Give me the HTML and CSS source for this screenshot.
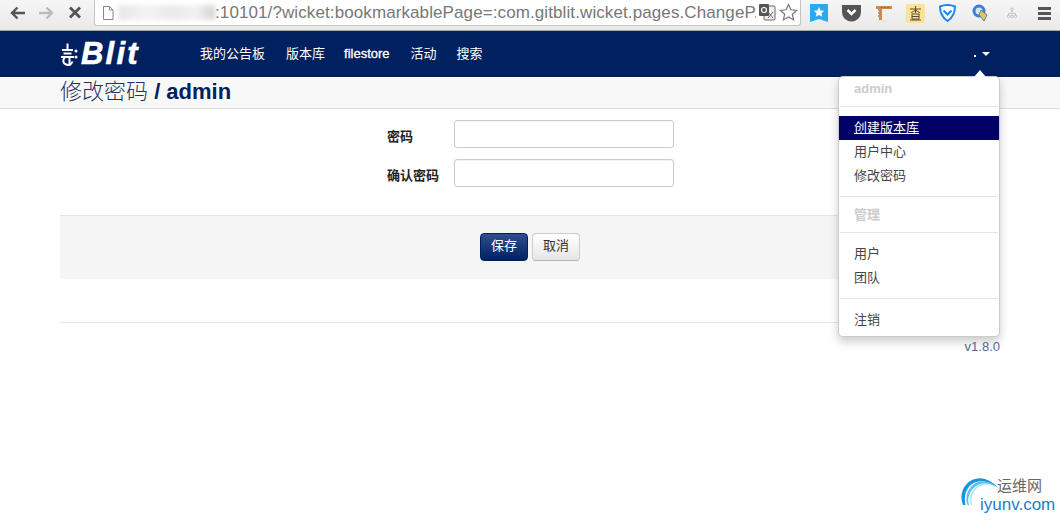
FILE: index.html
```html
<!DOCTYPE html>
<html lang="zh">
<head>
<meta charset="utf-8">
<title>修改密码</title>
<link rel="stylesheet" href="styles.css">
</head>
<body>
<div class="toolbar">
  <svg class="tb-nav" width="20" height="16" viewBox="0 0 20 16"><path d="M17 8H4M9.500 2.500L4 8l5.500 5.500" fill="none" stroke="#555" stroke-width="2.400"/></svg>
  <svg class="tb-nav fwd" width="20" height="16" viewBox="0 0 20 16"><path d="M3 8h13M10.500 2.500L16 8l-5.500 5.500" fill="none" stroke="#bbb" stroke-width="2.400"/></svg>
  <svg class="tb-nav stop" width="16" height="16" viewBox="0 0 16 16"><path d="M3 2.500l10 10M13 2.500l-10 10" fill="none" stroke="#555" stroke-width="2.800"/></svg>
  <div class="omnibox">
    <svg class="page-ico" width="12" height="14" viewBox="0 0 12 14"><path d="M1.500.5h6l3.500 3.500v9.500h-9.500zM7.500.5V4H11" fill="#fff" stroke="#888"/></svg>
    <span class="blurred"></span>
    <span class="url">:10101/?wicket:bookmarkablePage=:com.gitblit.wicket.pages.ChangeP.</span>
    <svg class="translate" width="18" height="18" viewBox="0 0 18 18"><rect x="6" y="3" width="11" height="14" rx="1" fill="#eee" stroke="#666"/><rect x="1" y="1" width="10" height="12" rx="1" fill="#555"/><circle cx="6" cy="7" r="2.500" fill="none" stroke="#fff" stroke-width="1.200"/><path d="M10 9l5 6M15 9l-5 6" stroke="#666"/></svg>
    <svg class="star" width="19" height="19" viewBox="0 0 19 19"><path d="M9.500 1.500l2.400 5.300 5.700.6-4.300 3.800 1.300 5.700-5.100-3-5.100 3 1.300-5.700L1.400 7.400l5.700-.6z" fill="#fff" stroke="#777" stroke-width="1.200"/></svg>
  </div>
  <div class="exts">
    <svg width="18" height="18" viewBox="0 0 18 18"><path d="M0 0h18v18l-9-3-9 3z" fill="#2aa9f0"/><path d="M9 3l1.600 3.400 3.600.4-2.700 2.400.8 3.500L9 10.900l-3.300 1.800.8-3.500L3.800 6.800l3.600-.4z" fill="#fff"/></svg>
    <svg width="19" height="18" viewBox="0 0 19 18"><path d="M0 1h19v7a9.500 9.500 0 0 1-19 0z" fill="#555"/><path d="M5.500 6l4 4 4-4" fill="none" stroke="#fff" stroke-width="2.500"/></svg>
    <svg class="ext-ruler" width="16" height="18" viewBox="0 0 16 18"><path d="M0 2h16v3H6v11H3V5H0z" fill="#c98a4b"/><path d="M2 6h1M2 9h1M2 12h1M6 3v1M9 3v1M12 3v1" stroke="#7d4f22"/><path d="M2 16.500h9v1H2z" fill="#ddd"/></svg>
    <svg class="ext-yellow" width="19" height="19" viewBox="0 0 19 19"><rect width="19" height="19" fill="#fbe39d"/><path d="M4 5h11M9.500 2v7M5 9l4.500-3 4.500 3M6 10h7v5H6zM6 12.500h7M4 16h11" fill="none" stroke="#5b4a2a"/></svg>
    <svg class="ext-shield" width="17" height="18" viewBox="0 0 17 18"><path d="M1 2.500Q8.500-.500 16 2.500 16 12 8.500 17 1 12 1 2.500z" fill="#fff" stroke="#1f86ee" stroke-width="2"/><path d="M4.500 6.500l4 4 4-4" fill="none" stroke="#1f86ee" stroke-width="2"/></svg>
    <svg class="ext-mag" width="16" height="18" viewBox="0 0 16 18"><circle cx="7" cy="7" r="6.500" fill="#3f7fd0"/><circle cx="7" cy="7" r="3.500" fill="#cfe6fb"/><path d="M9 6l6 5-3 6-5-6z" fill="#e7c25a" stroke="#2d5c9d" stroke-width=".7"/></svg>
    <svg class="ext-tree" width="14" height="16" viewBox="0 0 16 16"><rect width="16" height="16" rx="3" fill="#f2f2f2"/><path d="M8 5v3M4 11V8.500h8V11" fill="none" stroke="#bbb"/><circle cx="8" cy="3.800" r="1.500" fill="none" stroke="#bbb"/><circle cx="4" cy="12" r="1.500" fill="none" stroke="#bbb"/><circle cx="8" cy="12" r="1.500" fill="none" stroke="#bbb"/><circle cx="12" cy="12" r="1.500" fill="none" stroke="#bbb"/></svg>
    <span class="menu-ico"><i></i><i></i><i></i></span>
  </div>
</div>

<nav class="navbar">
  <div class="wrap nav-inner">
    <a class="brand"><svg class="brand-mark" width="18" height="25" viewBox="0 0 18 25"><path d="M2 8h11M7.500 1.500V8M3.500 11.500h8M1 15h13M4.500 15.500q-3 5 1.500 7t6.500-3M9.500 15v9" fill="none" stroke="#fff" stroke-width="2"/><circle cx="16" cy="9" r="1.500" fill="#fff"/><circle cx="16" cy="15" r="1.500" fill="#fff"/></svg><span class="brand-text">Blit</span></a>
    <ul class="nav-links">
      <li>我的公告板</li>
      <li class="nav-tight">版本库</li>
      <li class="latin">filestore</li>
      <li>活动</li>
      <li>搜索</li>
    </ul>
    <div class="user-toggle"><span class="dot"></span><span class="caret"></span></div>
  </div>
</nav>

<header class="subhead">
  <div class="wrap"><h1 class="title"><span class="title-light">修改密码</span> / admin</h1></div>
</header>

<main class="wrap">
  <form class="pw-form">
    <div class="form-row"><label class="form-label">密码</label><input class="form-input" type="password"></div>
    <div class="form-row"><label class="form-label">确认密码</label><input class="form-input" type="password"></div>
  </form>
  <div class="form-actions">
    <button class="btn btn-primary" type="button">保存</button>
    <button class="btn" type="button">取消</button>
  </div>
  <footer class="foot">v1.8.0</footer>
</main>

<div class="dropdown">
  <div class="dd-head">admin</div>
  <div class="dd-div dd-div-a"></div>
  <a class="dd-item active">创建版本库</a>
  <a class="dd-item">用户中心</a>
  <a class="dd-item">修改密码</a>
  <div class="dd-div dd-div-b"></div>
  <div class="dd-head">管理</div>
  <div class="dd-div dd-div-c"></div>
  <a class="dd-item">用户</a>
  <a class="dd-item">团队</a>
  <div class="dd-div dd-div-d"></div>
  <a class="dd-item">注销</a>
</div>

<div class="watermark">
  <svg class="wm-arc" width="48" height="44" viewBox="0 0 48 44"><path d="M8 33C0 14 24-7 44 17 26 1 6 12 10.500 33z" fill="#1a95dd"/><path d="M12.500 33C7 18 24 0 41 15 26 5 10 18 14 33z" fill="#5cc0ee"/><path d="M16 33C12 20 24 7 37 14 25 9 14 20 17 33z" fill="#a6def5"/></svg>
  <span class="wm-cn">运维网</span>
  <span class="wm-en">iyunv.com</span>
</div>
</body>
</html>
```
FILE: styles.css
```css
* { box-sizing: border-box; }
html, body { margin: 0; padding: 0; }
body {
  width: 1060px;
  height: 520px;
  overflow: hidden;
  position: relative;
  background: #fff;
  color: #333;
  font-family: "Liberation Sans", "Noto Sans CJK SC", sans-serif;
  font-size: 13px;
}
.toolbar {
  height: 31px;
  display: flex;
  align-items: flex-start;
  background: linear-gradient(#f6f6f6, #e9e9e9);
  border-bottom: 1px solid #a8a8a8;
}
.tb-nav { margin: 5px 0 0 8px; flex: none; }
.fwd { margin-left: 8px; }
.stop { margin-left: 11px; }
.omnibox {
  width: 707px;
  height: 26px;
  margin-left: 11px;
  display: flex;
  align-items: center;
  background: #fff;
  border: 1px solid #c4c4c4;
  border-top: 0;
  border-radius: 0 0 3px 3px;
  overflow: hidden;
  position: relative;
}
.page-ico { margin-left: 7px; flex: none; }
.blurred {
  width: 97px;
  height: 15px;
  margin-left: 4px;
  flex: none;
  background: linear-gradient(90deg, #e6e6e6, #f3f3f3 30%, #e9e9e9 55%, #f1f1f1 80%, #d4d4d4);
  filter: blur(2.500px);
}
.url {
  font-size: 17px;
  line-height: 26px;
  letter-spacing: .1px;
  color: #777;
  white-space: nowrap;
  flex: none;
  width: 541px;
  overflow: hidden;
}
.translate { position: absolute; left: 663px; top: 3px; background: #fff; }
.star { position: absolute; left: 684px; top: 3px; }
.exts {
  display: flex;
  align-items: center;
  gap: 14px;
  height: 26px;
  margin-left: 9px;
}
.ext-ruler { margin-left: 1px; }
.ext-mag { margin-left: 2px; }
.ext-tree { margin-left: 3px; }
.menu-ico { display: flex; flex-direction: column; gap: 2px; width: 13px; margin-left: 5px; }
.menu-ico i { display: block; height: 3px; background: #555; }

.navbar { height: 46px; background: #002060; }
.wrap { width: 940px; margin: 0 auto; }
.nav-inner { display: flex; align-items: center; height: 46px; position: relative; }
.brand { display: flex; align-items: center; width: 140px; height: 46px; color: #fff; }
.brand-mark { flex: none; }
.brand-text {
  font: italic bold 31px/46px "Liberation Sans", sans-serif;
  letter-spacing: 2.200px;
  -webkit-text-stroke: .6px #fff;
  margin-left: 3px;
}
.nav-links { display: flex; gap: 20px; list-style: none; margin: 0; padding: 0; color: #fff; font-size: 13px; line-height: 46px; }
.nav-links li:first-child { margin-right: 1px; }
.nav-tight { margin-right: -1px; }
.latin { -webkit-text-stroke: .3px #fff; margin-right: 1px; }
.user-toggle { margin-left: auto; margin-right: 10px; display: flex; align-items: center; gap: 6px; }
.dot { width: 2px; height: 2px; background: #fff; margin-top: 3px; }
.caret { width: 0; height: 0; border: 4px solid transparent; border-top-color: #fff; border-bottom: 0; }

.subhead { height: 32px; background: #f8f8f8; border-bottom: 1px solid #ddd; }
.title { margin: 0; font-size: 22px; line-height: 29px; font-weight: 700; color: #002060; white-space: nowrap; }
.title-light { font-weight: 300; color: #1f3262; }

.pw-form { padding: 11px 0 0; height: 106px; }
.form-row { display: flex; align-items: center; height: 28px; margin-bottom: 11px; }
.form-label { width: 67px; margin-left: 327px; padding-top: 3px; font-weight: 700; font-size: 13px; color: #222; }
.form-input {
  width: 220px;
  height: 28px;
  background: #fff;
  border: 1px solid #ccc;
  border-radius: 3px;
  box-shadow: inset 0 1px 1px rgba(0,0,0,.05);
}
.form-actions {
  height: 64px;
  display: flex;
  justify-content: center;
  gap: 4px;
  padding-top: 17px;
  background: #f5f5f5;
  border-top: 1px solid #e5e5e5;
}
.btn {
  width: 48px;
  height: 28px;
  padding: 0 0 5px;
  font-family: inherit;
  font-size: 13px;
  color: #333;
  background: linear-gradient(#fff, #e6e6e6);
  border: 1px solid #ccc;
  border-bottom-color: #b3b3b3;
  border-radius: 4px;
}
.btn-primary {
  color: #fff;
  background: linear-gradient(#2f4f8f, #002060);
  border-color: #002060;
}
.foot {
  margin-top: 43px;
  padding-top: 17px;
  border-top: 1px solid #e5e5e5;
  text-align: right;
  color: #4f6f9f;
  font-size: 13px;
  line-height: 14px;
}

.dropdown {
  position: absolute;
  left: 838px;
  top: 76px;
  width: 162px;
  height: 261px;
  background: #fff;
  border: 1px solid rgba(0,0,0,.2);
  border-radius: 5px;
  box-shadow: 0 5px 10px rgba(0,0,0,.2);
  padding-top: 1px;
}
.dropdown::before {
  content: "";
  position: absolute;
  right: 13px;
  top: -7px;
  border: 6px solid transparent;
  border-top: 0;
  border-bottom: 7px solid #fff;
}
.dd-head {
  padding: 0 15px;
  height: 22px;
  font-size: 13px;
  line-height: 22px;
  font-weight: 700;
  color: #ccc;
}
.dd-div { height: 1px; margin: 0 1px; background: #e5e5e5; }
.dd-div-a { margin-top: 6px; margin-bottom: 9px; }
.dd-div-b { margin-top: 8px; margin-bottom: 7px; }
.dd-div-c { margin-top: 6px; margin-bottom: 9px; }
.dd-div-d { margin-top: 8px; margin-bottom: 9px; }
.dd-item {
  display: block;
  height: 24px;
  padding: 0 15px;
  font-size: 13px;
  line-height: 23px;
  color: #444;
}
.dd-item.active { background: #000066; color: #fff; text-decoration: underline; }

.watermark { position: absolute; left: 955px; top: 472px; width: 105px; height: 44px; }
.wm-arc { position: absolute; left: 0; top: 0; }
.wm-cn { position: absolute; left: 42px; top: 5px; font-size: 15px; line-height: 18px; color: #666; white-space: nowrap; }
.wm-en { position: absolute; left: 25px; top: 23px; font-size: 17px; line-height: 20px; color: #1a7fc8; white-space: nowrap; }
```
